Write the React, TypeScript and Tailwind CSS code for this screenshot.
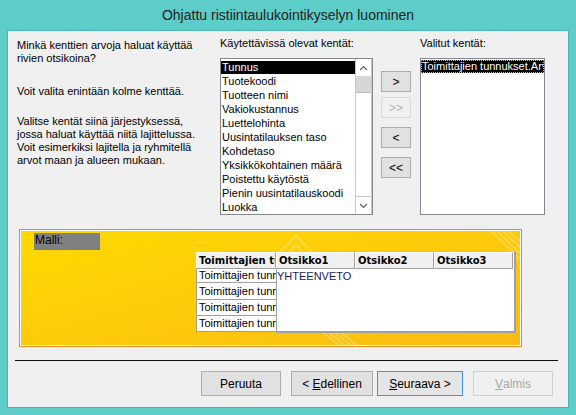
import React from "react";

const items = [
  "Tunnus",
  "Tuotekoodi",
  "Tuotteen nimi",
  "Vakiokustannus",
  "Luettelohinta",
  "Uusintatilauksen taso",
  "Kohdetaso",
  "Yksikkökohtainen määrä",
  "Poistettu käytöstä",
  "Pienin uusintatilauskoodi",
  "Luokka",
];

function Chevron({ up }: { up?: boolean }) {
  return (
    <svg width="9" height="6" viewBox="0 0 9 6">
      <polyline
        points={up ? "1,5 4.5,1.5 8,5" : "1,1 4.5,4.5 8,1"}
        fill="none"
        stroke="#606060"
        strokeWidth="1.1"
      />
    </svg>
  );
}

function MoveBtn({ label, disabled, className }: { label: string; disabled?: boolean; className?: string }) {
  return (
    <div
      className={
        "w-[30px] h-[21px] flex items-center justify-center text-[12px] leading-none border " +
        (disabled
          ? "bg-[#f0f0f0] border-[#d9d9d9] text-[#b0b0b0]"
          : "bg-[#e1e1e1] border-[#adadad] text-[#000]") +
        " " +
        (className || "")
      }
    >
      {label}
    </div>
  );
}

export default function App() {
  return (
    <div className="w-[576px] h-[415px] bg-[#5ccdc8] font-['Liberation_Sans',Arial,sans-serif] text-[11px] text-black overflow-hidden">
      <div className="h-[30px] flex items-center justify-center text-[14px] text-[#222]">
        Ohjattu ristiintaulukointikyselyn luominen
      </div>
      <div className="ml-[7px] w-[562px] h-[378px] border border-[#48b5b0] bg-[#f0f0f0] flex flex-col">
        {/* top section */}
        <div className="flex h-[187px]">
          <div className="w-[212px] pl-[9px] pt-[8px] leading-[13px] whitespace-nowrap">
            <div>
              Minkä kenttien arvoja haluat käyttää
              <br />
              rivien otsikoina?
            </div>
            <div className="mt-[20px]">Voit valita enintään kolme kenttää.</div>
            <div className="mt-[17px]">
              Valitse kentät siinä järjestyksessä,
              <br />
              jossa haluat käyttää niitä lajittelussa.
              <br />
              Voit esimerkiksi lajitella ja ryhmitellä
              <br />
              arvot maan ja alueen mukaan.
            </div>
          </div>
          <div className="w-[153px] pt-[6px]">
            <div className="h-[13px] leading-[13px]">Käytettävissä olevat kentät:</div>
            <div className="mt-[8px] h-[157px] border border-[#828790] bg-white flex">
              <div className="flex-1 pt-[1px] overflow-hidden">
                {items.map((it, i) => (
                  <div key={it} className="h-[14px] flex items-center">
                    <div
                      className={
                        "w-full h-[13px] leading-[13px] pl-[1px] whitespace-nowrap " +
                        (i === 0 ? "bg-black text-white" : "")
                      }
                    >
                      {it}
                    </div>
                  </div>
                ))}
              </div>
              <div className="w-[17px] flex flex-col border-l border-r border-[#c8c8c8] bg-white">
                <div className="h-[18px] flex items-center justify-center border-b border-[#dcdcdc]">
                  <Chevron up />
                </div>
                <div className="h-[16px] bg-[#d6d6d6] border-b border-[#c0c0c0]" />
                <div className="flex-1" />
                <div className="h-[18px] flex items-center justify-center border-t border-[#c8c8c8]">
                  <Chevron />
                </div>
              </div>
            </div>
          </div>
          <div className="ml-[8px] w-[30px] pt-[40px] flex flex-col">
            <MoveBtn label=">" />
            <MoveBtn label=">>" disabled className="mt-[5px]" />
            <MoveBtn label="<" className="mt-[9px]" />
            <MoveBtn label="<<" className="mt-[9px]" />
          </div>
          <div className="ml-[9px] w-[125px] pt-[6px]">
            <div className="h-[13px] leading-[13px]">Valitut kentät:</div>
            <div className="mt-[8px] h-[157px] border border-[#828790] bg-white pt-[1px] overflow-hidden">
              <div className="h-[13px] leading-[11px] bg-black text-white border border-dotted border-[#bbbbbb] whitespace-nowrap overflow-hidden">
                Toimittajien tunnukset.Arvo
              </div>
            </div>
          </div>
        </div>

        {/* sample area */}
        <div className="ml-[11px] mt-[11px] w-[503px] h-[118px] border border-[#f0891c]">
          <div className="relative w-full h-full border border-white bg-[linear-gradient(165deg,#ffd900_0%,#fdc90a_55%,#f9bb14_100%)] overflow-hidden">
            <svg className="absolute inset-0" width="501" height="116" viewBox="0 0 501 116">
              <g stroke="#ffffff" strokeOpacity="0.25" strokeWidth="2" fill="none">
                <polyline points="250,40 275,14 300,40" />
                <polyline points="240,40 275,5 310,40" />
                <line x1="470" y1="0" x2="501" y2="30" />
                <line x1="476" y1="0" x2="501" y2="24" />
                <line x1="482" y1="0" x2="501" y2="18" />
                <line x1="488" y1="0" x2="501" y2="12" />
                <line x1="300" y1="100" x2="320" y2="116" />
                <line x1="306" y1="100" x2="326" y2="116" />
                <line x1="312" y1="100" x2="332" y2="116" />
                <line x1="318" y1="100" x2="338" y2="116" />
                <polyline points="690,116 705,100" />
              </g>
            </svg>
            <div className="relative ml-[13px] mt-[2px] w-[66px] h-[17px] bg-[#808080] leading-[15px] pl-[1px] text-[12px] text-black">
              Malli:
            </div>
            <div className="relative ml-[175px] mt-[2px] flex">
              <div className="w-[80px] flex flex-col">
                <div className="h-[17px] bg-[#f0f0f0] border-t border-l border-white border-r border-b border-r-[#a0a0a0] border-b-[#a0a0a0] font-['DejaVu_Sans',sans-serif] font-bold text-[10px] leading-[15px] pl-[2px] whitespace-nowrap overflow-hidden">
                  Toimittajien tunnus
                </div>
                {[14, 17, 16, 16].map((h, i) => (
                  <div
                    key={i}
                    style={{ height: h }}
                    className="bg-white border-l border-b border-[#a0a0a0] pl-[2px] whitespace-nowrap overflow-hidden flex items-center text-[11px]"
                  >
                    Toimittajien tunnus
                  </div>
                ))}
              </div>
              <div className="w-[240px] h-[81px] flex flex-col border-r-2 border-b-2 border-[#a0a0a0] bg-white">
                <div className="flex h-[17px]">
                  {["Otsikko1", "Otsikko2", "Otsikko3"].map((t) => (
                    <div
                      key={t}
                      className="w-[79px] h-[17px] bg-[#f0f0f0] border-t border-l border-white border-r border-b border-r-[#a0a0a0] border-b-[#a0a0a0] font-['DejaVu_Sans',sans-serif] font-bold text-[10px] leading-[15px] pl-[2px]"
                    >
                      {t}
                    </div>
                  ))}
                </div>
                <div className="flex-1 border-l border-[#a0a0a0] text-[#1a1a60] leading-[14px] text-[11px]">
                  YHTEENVETO
                </div>
              </div>
            </div>
          </div>
        </div>

        {/* separator */}
        <div className="ml-[7px] mt-[13px] w-[543px] h-[1px] bg-[#101010]" />

        {/* buttons */}
        <div className="mt-[10px] flex pl-[193px] text-[12px]">
          <div className="w-[80px] h-[25px] flex items-center justify-center bg-[#e1e1e1] border border-[#adadad]">
            Peruuta
          </div>
          <div className="ml-[10px] w-[82px] h-[25px] flex items-center justify-center bg-[#e1e1e1] border border-[#adadad]">
            &lt;&nbsp;<span className="underline">E</span>dellinen
          </div>
          <div className="ml-[4px] w-[86px] h-[25px] flex items-center justify-center bg-[#e5e5e5] border border-[#3c94e8]">
            <span className="underline">S</span>euraava &gt;
          </div>
          <div className="ml-[10px] w-[80px] h-[25px] flex items-center justify-center bg-[#f0f0f0] border border-[#d0d0d0] text-[#a8a8a8]">
            <span className="underline">V</span>almis
          </div>
        </div>
      </div>
    </div>
  );
}
